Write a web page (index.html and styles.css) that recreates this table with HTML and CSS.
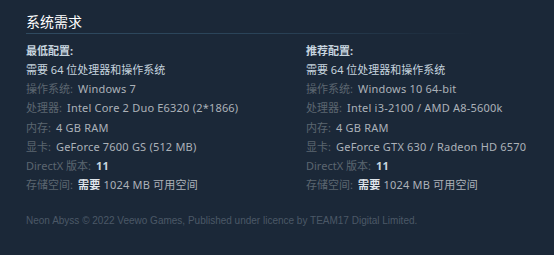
FILE: index.html
```html
<!DOCTYPE html>
<html lang="zh-CN">
<head>
<meta charset="utf-8">
<title>系统需求</title>
<link rel="stylesheet" href="styles.css">
</head>
<body>
<div class="sysreq">
  <h2 class="sysreq-title">系统需求</h2>
  <div class="sysreq-cols">
    <div class="sysreq-col">
      <div class="col-title">最低配置:</div>
      <ul class="req-list">
        <li class="req-note">需要 64 位处理器和操作系统</li>
        <li><span class="lbl">操作系统:</span> Windows 7</li>
        <li><span class="lbl">处理器:</span> Intel Core 2 Duo E6320 (2*1866)</li>
        <li><span class="lbl">内存:</span> 4 GB RAM</li>
        <li><span class="lbl">显卡:</span> GeForce 7600 GS (512 MB)</li>
        <li><span class="lbl">DirectX 版本:</span> <span class="num">11</span></li>
        <li><span class="lbl">存储空间:</span> <span class="strong">需要</span> 1024 MB 可用空间</li>
      </ul>
    </div>
    <div class="sysreq-col">
      <div class="col-title">推荐配置:</div>
      <ul class="req-list">
        <li class="req-note">需要 64 位处理器和操作系统</li>
        <li><span class="lbl">操作系统:</span> Windows 10 64-bit</li>
        <li><span class="lbl">处理器:</span> Intel i3-2100 / AMD A8-5600k</li>
        <li><span class="lbl">内存:</span> 4 GB RAM</li>
        <li><span class="lbl">显卡:</span> GeForce GTX 630 / Radeon HD 6570</li>
        <li><span class="lbl">DirectX 版本:</span> <span class="num">11</span></li>
        <li><span class="lbl">存储空间:</span> <span class="strong">需要</span> 1024 MB 可用空间</li>
      </ul>
    </div>
  </div>
  <p class="legal">Neon Abyss © 2022 Veewo Games, Published under licence by TEAM17 Digital Limited.</p>
</div>
</body>
</html>
```

FILE: styles.css
```css
html, body {
  margin: 0;
  padding: 0;
  background: #1b2838;
}
body {
  font-family: "Noto Sans", "Noto Sans CJK SC", sans-serif;
  color: #acb2b8;
  width: 554px;
  height: 255px;
  overflow: hidden;
}
.sysreq {
  padding: 12px 0 0 26px;
}
.sysreq-title {
  margin: 0;
  height: 22px;
  box-sizing: border-box;
  font-size: 14px;
  font-weight: normal;
  line-height: 20px;
  color: #ffffff;
  background: linear-gradient(to right, #2f4a60 0%, #2a4358 45%, #1b2838 85%) left bottom / 100% 1px no-repeat;
}
.sysreq-cols {
  display: grid;
  grid-template-columns: 280px 248px;
  margin-top: 7px;
}
.col-title {
  font-size: 11px;
  font-weight: bold;
  line-height: 19px;
  color: #c6d4df;
}
.req-list {
  list-style: none;
  margin: 0;
  padding: 0;
  font-size: 11px;
  line-height: 19.2px;
  letter-spacing: 0.2px;
}
.req-list li {
  white-space: nowrap;
}
.req-note {
  color: #c6d4df;
  letter-spacing: 0;
}
.lbl {
  color: #5b6670;
  letter-spacing: 0;
  margin-right: 2px;
}
.num {
  color: #c6d4df;
  font-weight: bold;
}
.strong {
  color: #e0e6ec;
  font-weight: bold;
}
.legal {
  margin: 20px 0 0;
  font-family: "Liberation Sans", "Noto Sans CJK SC", sans-serif;
  font-size: 10px;
  line-height: 14px;
  color: #4b5867;
  white-space: nowrap;
}
```
